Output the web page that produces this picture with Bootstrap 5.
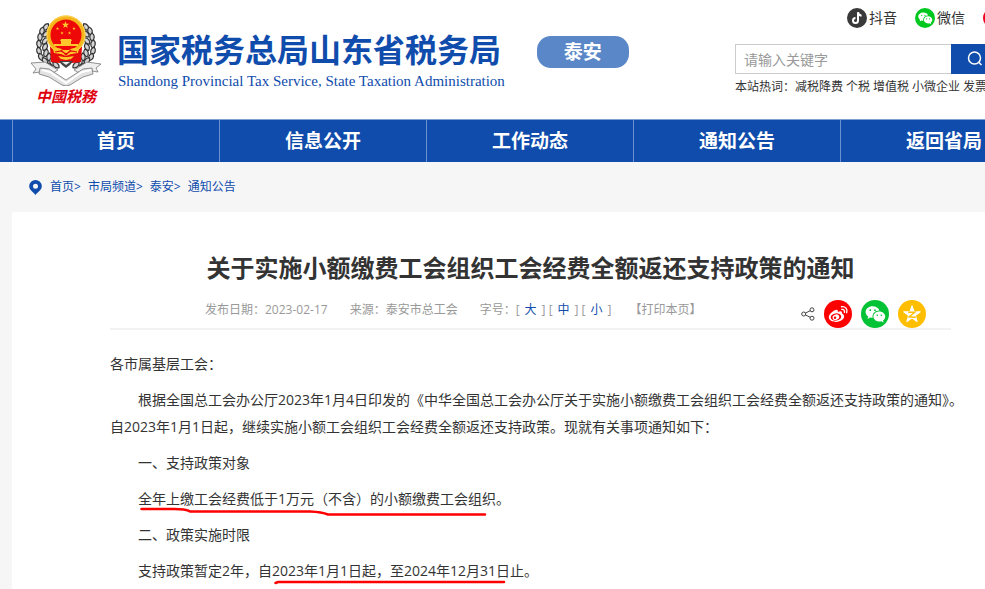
<!DOCTYPE html>
<html lang="zh-CN">
<head>
<meta charset="utf-8">
<meta name="viewport" content="width=device-width, initial-scale=1">
<title>关于实施小额缴费工会组织工会经费全额返还支持政策的通知</title>
<link href="https://cdn.jsdelivr.net/npm/bootstrap@5.3.0/dist/css/bootstrap.min.css" rel="stylesheet">
<style>
:root { --brand: #0f4cac; --pale: #f6f6f6; }
body { font-family: "Open Sans", "Noto Sans CJK SC", sans-serif; font-size: 14px; color: #333; background: #fff; overflow-x: hidden; }
a { color: inherit; text-decoration: none; }
svg { display: block; flex: none; }
.frame { min-width: 1061px; }
.masthead { padding: 8px 30px 13px; }
.brand-mark { width: 72px; padding-top: 6px; }
.brand-script { font-size: 15px; line-height: 20px; color: #e00010; font-weight: 700; font-style: italic; }
.brand-text { margin-left: 15px; padding-top: 20px; color: var(--brand); }
.brand-cn { font-size: 32px; line-height: 44px; font-weight: 700; margin: 0; }
.brand-en { font-family: "Liberation Serif", serif; font-size: 15px; line-height: 18px; padding-left: 1px; }
.city-pill { margin: 28px 0 0 32px; width: 92px; line-height: 32px; font-size: 19px; border-radius: 14px; background: #5987c7; }
.tools { width: 296px; }
.social { line-height: 20px; padding-left: 112px; gap: 18px; }
.social a { gap: 2px; }
.search { margin-top: 16px; height: 30px; }
.search input { width: 216px; padding: 0 8px; font-size: 14px; border: 1px solid #ccc; border-right: 0; border-radius: 0; }
.search input::placeholder { color: #999; }
.search button { width: 48px; background: var(--brand); border-radius: 0; border: 0; }
.hot { font-size: 12px; line-height: 18px; margin-top: 4px; gap: 3px; }
.main-nav { background: var(--brand); border-top: 1px solid #7f9fd3; padding-left: 12px; }
.main-nav a { width: 207px; line-height: 42px; font-size: 19px; font-weight: 700; color: #fff; border-left: 1px solid #6b92cf; }
.lower { background: var(--pale); padding: 0 12px; }
.crumbs { font-size: 12px; line-height: 18px; color: var(--brand); padding: 16px 16px; gap: 7px; }
.sheet { background: #fff; padding: 38px 98px 3px; }
.headline { font-size: 24px; line-height: 36px; font-weight: 700; margin: 0; }
.meta { font-size: 12px; line-height: 18px; color: #999; border-bottom: 2px solid #f2f2f2; margin-top: 14px; padding: 0 25px 0 95px; }
.meta button { color: var(--brand); background: none; border: 0; padding: 0 5px; }
.meta .print { color: #999; padding: 0; margin-left: 18px; }
.facts { gap: 22px; margin-top: -8px; }
.share { gap: 9px; }
.prose { padding-top: 20px; margin-right: -24px; }
.prose p { line-height: 27px; margin: 0 0 9px; text-indent: 2em; }
.prose .salute { text-indent: 0; }
.marked { position: relative; display: inline-block; text-indent: 0; }
.marked svg { position: absolute; left: 2px; top: 22px; }
</style>
<script src="https://cdn.jsdelivr.net/npm/bootstrap@5.3.0/dist/js/bootstrap.bundle.min.js"></script>
</head>
<body>
<svg width="0" height="0" class="position-absolute" aria-hidden="true">
  <defs>
    <symbol id="wechat" viewBox="0 0 28 28">
      <path fill="#fff" d="M11.6 6.2c-3.9 0-7 2.6-7 5.8 0 1.9 1 3.500 2.700 4.600l-.8 2.300 2.700-1.500c.8.2 1.600.3 2.500.3-.9-3.700 2.100-7.200 6.700-7.200-.7-2.500-3.500-4.300-6.800-4.300z"/>
      <path fill="#fff" d="M24.200 16.600c0-2.800-2.700-5-5.900-5s-5.900 2.200-5.900 5 2.700 5 5.900 5c.7 0 1.400-.1 2.100-.3l2.100 1.300-.5-2c1.400-1 2.200-2.400 2.200-4z"/>
      <g fill="currentColor"><circle cx="9.300" cy="10.200" r=".9"/><circle cx="14" cy="10.200" r=".9"/><circle cx="16.300" cy="15.200" r=".8"/><circle cx="20.300" cy="15.200" r=".8"/></g>
    </symbol>
    <path id="ear" d="M0-4C3-2 3 2 0 4C-3 2-3-2 0-4Z"/>
    <path id="star5" d="M0-1 .24-.31.95-.31.38.12.59.81 0 .39-.59.81-.38.12-.95-.31-.24-.31Z"/>
  </defs>
</svg>
<div class="frame min-vh-100 d-flex flex-column">
  <header class="masthead d-flex align-items-start">
    <div class="brand-mark d-flex flex-column align-items-center">
      <svg width="72" height="72" viewBox="0 0 72 72" role="img" aria-label="税徽">
        <g fill="#d4d4d4" stroke="#333" stroke-width="1.200">
          <g id="wheat">
            <use href="#ear" transform="translate(16 13) rotate(35)"/><use href="#ear" transform="translate(12 17) rotate(15)"/>
            <use href="#ear" transform="translate(16 20) rotate(50)"/><use href="#ear" transform="translate(10 23) rotate(0)"/>
            <use href="#ear" transform="translate(15 27) rotate(40)"/><use href="#ear" transform="translate(9 30) rotate(-8)"/>
            <use href="#ear" transform="translate(15 33) rotate(25)"/><use href="#ear" transform="translate(9 37) rotate(-18)"/>
            <use href="#ear" transform="translate(16 39) rotate(15)"/><use href="#ear" transform="translate(11 43) rotate(-25)"/>
            <use href="#ear" transform="translate(19 43) rotate(5)"/><use href="#ear" transform="translate(15 47) rotate(-40)"/>
            <use href="#ear" transform="translate(22 48) rotate(-20)"/><use href="#ear" transform="translate(19 52) rotate(-55)"/>
            <use href="#ear" transform="translate(26 51) rotate(-50)"/>
          </g>
          <use href="#wheat" transform="translate(72 0) scale(-1 1)"/>
        </g>
        <path d="M20 33h32l-1 15-9 1-6 2-6-2-9-1z" fill="#e60a0a"/>
        <circle cx="36" cy="21" r="17.500" fill="#ee0808" stroke="#f4b61a" stroke-width="4"/>
        <circle cx="36" cy="21" r="19" fill="none" stroke="#ffd75a" stroke-width="1"/>
        <g fill="#ffc72c">
          <use href="#star5" transform="translate(35.500 11) scale(3.800)"/>
          <use href="#star5" transform="translate(27.500 14.500) scale(1.700)"/><use href="#star5" transform="translate(44 14.500) scale(1.700)"/>
          <use href="#star5" transform="translate(32 19) scale(1.700)"/><use href="#star5" transform="translate(39.500 19) scale(1.700)"/>
          <path d="M31 25h10l1 2h-1v3h7v2H24v-2h7v-3h-1z"/>
          <path d="M23 35c4-2 7-1 10 1h6c3-2 6-3 10-1l-1 4-7 1-5 2-5-2-7-1z"/>
          <path d="M28 42l6 1h4l6-1-3 3-5 1-5-1z"/>
        </g>
        <path d="M25 38l6-1 5 3 5-3 6 1M31 36l5 5 5-5" fill="none" stroke="#e60a0a" stroke-width="1.200"/>
        <g stroke="#777" stroke-width=".8" fill="#eee">
          <path d="M1 49l14-1 13 8-7 4-11-2-7 1 3-4z"/><path d="M71 50l-14-2-13 8 7 4 11-3 6 1-2-4z"/>
          <path d="M10 54l9 1 17 11 17-11 9-1 1 6-10 3-13 8q-4 2-8 0l-13-8-10-3z" fill="#e2e2e2"/>
          <path d="M12 56l8 2 16 11 16-11 9-2" fill="none" stroke="#fff" stroke-width="2"/>
        </g>
        <path d="M29 47l14 0-3 4-4 3-4-3z" fill="#444"/><path d="M32 48h8l-4 3z" fill="#eee"/>
      </svg>
      <div class="brand-script">中國税務</div>
    </div>
    <div class="brand-text">
      <div class="brand-cn">国家税务总局山东省税务局</div>
      <div class="brand-en" lang="en">Shandong Provincial Tax Service, State Taxation Administration</div>
    </div>
    <div class="city-pill text-white text-center fw-bold">泰安</div>
    <div class="tools ms-auto">
      <div class="social d-flex">
        <a href="#" class="d-flex"><svg width="20" height="20" viewBox="0 0 20 20" aria-hidden="true"><circle cx="10" cy="10" r="10" fill="#393939"/><path d="M11 4.200v8.200a2.500 2.500 0 1 1-2.500-2.500M11 4.200c.2 2 1.500 3.300 3.600 3.500" fill="none" stroke="#fff" stroke-width="2"/></svg>抖音</a>
        <a href="#" class="d-flex"><svg width="20" height="20" viewBox="0 0 28 28" color="#00c81e" aria-hidden="true"><circle cx="14" cy="14" r="14" fill="currentColor"/><use href="#wechat"/></svg>微信</a>
        <a href="#" aria-label="微博"><svg width="20" height="20" viewBox="0 0 20 20" aria-hidden="true"><circle cx="10" cy="10" r="10" fill="#f00020"/></svg></a>
      </div>
      <form class="search d-flex" role="search">
        <input type="text" class="form-control" aria-label="站内搜索" placeholder="请输入关键字">
        <button type="button" class="d-flex align-items-center justify-content-center" aria-label="搜索"><svg width="16" height="16" viewBox="0 0 16 16" fill="none" stroke="#fff" stroke-width="1.500"><circle cx="7.500" cy="7" r="6"/><path d="M11.700 11.300 14.500 14"/></svg></button>
      </form>
      <div class="hot d-flex text-nowrap"><span>本站热词：<a href="#">减税降费</a></span><a href="#">个税</a><a href="#">增值税</a><a href="#">小微企业</a><a href="#">发票</a></div>
    </div>
  </header>

  <nav class="main-nav d-flex text-center" aria-label="主导航">
    <a href="#">首页</a><a href="#">信息公开</a><a href="#">工作动态</a><a href="#">通知公告</a><a href="#">返回省局</a>
  </nav>

  <main class="lower flex-grow-1 d-flex flex-column">
    <nav class="crumbs d-flex" aria-label="当前位置">
      <svg width="15" height="18" viewBox="0 0 15 18" aria-hidden="true"><path d="M7.500 2A6.300 6.300 0 0 0 1.200 8.200C1.200 12 5 13.500 7.500 17c2.500-3.500 6.300-5 6.300-8.800A6.300 6.300 0 0 0 7.500 2zm0 3.700a2.500 2.500 0 1 1 0 5 2.500 2.500 0 0 1 0-5z" fill="#0f4cac" fill-rule="evenodd"/></svg>
      <span><a href="#">首页</a>&gt;</span><span><a href="#">市局频道</a>&gt;</span><span><a href="#">泰安</a>&gt;</span><a href="#">通知公告</a>
    </nav>
    <article class="sheet flex-grow-1">
      <h1 class="headline text-center">关于实施小额缴费工会组织工会经费全额返还支持政策的通知</h1>
      <div class="meta d-flex align-items-center justify-content-between">
        <div class="facts d-flex">
          <span>发布日期：2023-02-17</span><span>来源：泰安市总工会</span>
          <span>字号：[<button type="button">大</button>] [<button type="button">中</button>] [<button type="button">小</button>]<button type="button" class="print">【打印本页】</button></span>
        </div>
        <div class="share d-flex align-items-center">
          <svg width="14" height="14" viewBox="0 0 14 14" fill="none" stroke="#444" role="img" aria-label="分享"><circle cx="2.700" cy="7" r="2"/><circle cx="11" cy="2.800" r="2"/><circle cx="11" cy="11.200" r="2"/><path d="M4.500 6.100 9.200 3.700M4.500 7.900l4.700 2.400"/></svg>
          <a href="#" aria-label="分享到微博"><svg width="28" height="28" viewBox="0 0 28 28"><circle cx="14" cy="14" r="14" fill="#f00"/><path d="M17.800 13.300c.6-1.800-.6-2.800-4-1.300.6-2.200-.9-3.100-3.600-1.500-2.800 1.600-5.400 4.400-5.400 6.700 0 3 3.600 4.700 7.300 4.700 4.800 0 8-2.800 8-5.300 0-1.700-1.100-2.600-2.300-3.300z" fill="#fff"/><ellipse cx="12" cy="17" rx="5.300" ry="3.600" fill="#f00" transform="rotate(-8 12 17)"/><ellipse cx="11.800" cy="17.200" rx="3.400" ry="2.700" fill="#fff" transform="rotate(-20 12 17)"/><circle cx="11" cy="17.700" r="1.200" fill="#f00"/><path d="M17.500 6.700c3.800-.6 6.400 2.500 5.200 6M17.800 9.400c2-.2 3.100 1.200 2.600 2.900" stroke="#fff" stroke-width="1.400" fill="none" stroke-linecap="round"/></svg></a>
          <a href="#" aria-label="分享到微信"><svg width="28" height="28" viewBox="0 0 28 28" color="#04c235"><circle cx="14" cy="14" r="14" fill="currentColor"/><use href="#wechat"/></svg></a>
          <a href="#" aria-label="分享到QQ空间"><svg width="28" height="28" viewBox="0 0 28 28"><circle cx="14" cy="14" r="14" fill="#ffbe00"/><use href="#star5" transform="translate(14 14.500) scale(8.600)" fill="#fff" stroke="#fff" stroke-width=".14" stroke-linejoin="round"/><path d="M10.300 12.300h6.500l-5.700 4.500c2 .5 4.200.6 6.700.2" fill="none" stroke="#ffbe00" stroke-width="1.400"/></svg></a>
        </div>
      </div>
      <div class="prose">
        <p class="salute">各市属基层工会：</p>
        <p>根据全国总工会办公厅2023年1月4日印发的《中华全国总工会办公厅关于实施小额缴费工会组织工会经费全额返还支持政策的通知》。<br>自2023年1月1日起，继续实施小额工会组织工会经费全额返还支持政策。现就有关事项通知如下：</p>
        <p>一、支持政策对象</p>
        <p><span class="marked">全年上缴工会经费低于1万元（不含）的小额缴费工会组织<svg width="348" height="10" viewBox="0 0 348 10" aria-hidden="true"><path d="M1.500 2H34q12 0 16 2.500H170Q182 5 188 7.500H345" fill="none" stroke="#f00" stroke-width="2.500" stroke-linecap="round"/></svg></span>。</p>
        <p>二、政策实施时限</p>
        <p>支持政策暂定2年，自<span class="marked">2023年1月1日起，至2024年12月31日<svg width="232" height="6" viewBox="0 0 232 6" aria-hidden="true"><path d="M1.500 4 4 3H230" fill="none" stroke="#f00" stroke-width="2.500" stroke-linecap="round"/></svg></span>止。</p>
      </div>
    </article>
  </main>
</div>
</body>
</html>
